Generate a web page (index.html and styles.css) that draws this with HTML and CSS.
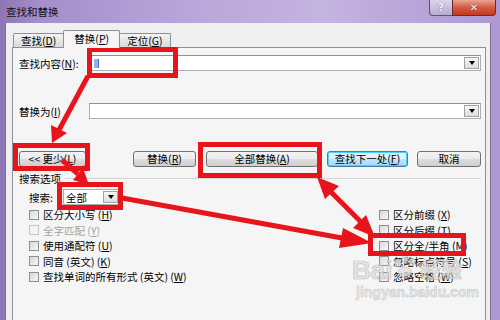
FILE: index.html
```html
<!DOCTYPE html>
<html lang="zh-CN">
<head>
  <meta charset="UTF-8">
  <title>查找和替换</title>
  <link rel="stylesheet" href="styles.css">
</head>
<body>
  <div class="window">
    <div class="titlebar">
      <span class="title">查找和替换</span>
      <div class="caption-btns">
        <span class="cap-btn help">?</span>
        <span class="cap-btn close">✕</span>
      </div>
    </div>

    <div class="client">
      <div class="tabs">
        <div class="tab">查找(<u>D</u>)</div>
        <div class="tab active">替换(<u>P</u>)</div>
        <div class="tab">定位(<u>G</u>)</div>
      </div>

      <div class="panel">
        <div class="field">
          <label>查找内容(<u>N</u>):</label>
          <div class="combo"><span class="caret"></span><span class="drop"></span></div>
        </div>
        <div class="field second">
          <label>替换为(<u>I</u>)</label>
          <div class="combo"><span class="drop"></span></div>
        </div>

        <div class="buttons">
          <div class="btn less">&lt;&lt; 更少(<u>L</u>)</div>
          <div class="btn replace">替换(<u>R</u>)</div>
          <div class="btn replace-all">全部替换(<u>A</u>)</div>
          <div class="btn find-next">查找下一处(<u>F</u>)</div>
          <div class="btn cancel">取消</div>
        </div>

        <div class="group-title"><span>搜索选项</span><i></i></div>

        <div class="search-row">
          <span class="search-label">搜索:</span>
          <div class="select">全部<span class="drop"></span></div>
        </div>

        <div class="options">
          <div class="col first">
            <div class="opt"><span class="box"></span>区分大小写 (<u>H</u>)</div>
            <div class="opt disabled"><span class="box"></span>全字匹配 (<u>Y</u>)</div>
            <div class="opt"><span class="box"></span>使用通配符 (<u>U</u>)</div>
            <div class="opt"><span class="box"></span>同音 (英文) (<u>K</u>)</div>
            <div class="opt"><span class="box"></span>查找单词的所有形式 (英文) (<u>W</u>)</div>
          </div>
          <div class="col">
            <div class="opt"><span class="box"></span>区分前缀 (<u>X</u>)</div>
            <div class="opt"><span class="box"></span>区分后缀 (<u>T</u>)</div>
            <div class="opt"><span class="box"></span>区分全/半角 (<u>M</u>)</div>
            <div class="opt"><span class="box"></span>忽略标点符号 (<u>S</u>)</div>
            <div class="opt"><span class="box"></span>忽略空格 (<u>W</u>)</div>
          </div>
        </div>
      </div>
    </div>

    <!-- annotations drawn over the dialog -->
    <svg class="marks" width="500" height="320" viewBox="0 0 500 320">
      <g class="watermark">
        <text x="352" y="279" class="wm-big">Bai</text>
        <g class="paw">
          <ellipse cx="398" cy="263" rx="3" ry="4"/>
          <ellipse cx="405" cy="259" rx="3" ry="4"/>
          <ellipse cx="412" cy="262" rx="3" ry="4"/>
          <ellipse cx="405" cy="272" rx="7" ry="5"/>
        </g>
        <text x="420" y="277" class="wm-cn">经验</text>
        <text x="356" y="297" class="wm-url">jingyan.baidu.com</text>
      </g>

      <g class="red-box">
        <rect x="89.5" y="49.5" width="86" height="26"/>
        <rect x="15.5" y="145.5" width="72" height="23"/>
        <rect x="200.5" y="144.5" width="119" height="31"/>
        <rect x="59.5" y="184.5" width="61" height="23"/>
        <rect x="370.5" y="235.5" width="93" height="18"/>
      </g>

      <g class="arrow">
        <line x1="88" y1="76" x2="59" y2="130"/>
        <polygon points="52,143 67,133 51,125"/>

        <line x1="62" y1="160" x2="78" y2="174"/>
        <polygon points="89,185 73,180 83,168"/>

        <line x1="122" y1="198" x2="342" y2="238"/>
        <polygon points="372,243 339,248 343,228"/>

        <line x1="331" y1="192" x2="361" y2="222"/>
        <polygon points="317,177 325,199 339,186"/>
        <polygon points="375,237 353,228 366,215"/>
      </g>
    </svg>
  </div>
</body>
</html>
```

FILE: styles.css
```css
body {
  margin: 0;
  width: 500px;
  height: 320px;
  overflow: hidden;
  font-family: "Noto Sans CJK SC", "Liberation Sans", sans-serif;
  font-size: 10.5px;
  color: #000;
}
u {
  text-decoration: underline;
}
.window {
  position: relative;
  width: 500px;
  height: 320px;
  overflow: hidden;
  background: linear-gradient(90deg, #8e76b6 0, #a58ecc 8%, #bba7db 40%, #c5b3e1 65%, #ae98d2 100%);
}
.titlebar {
  height: 23px;
  display: flex;
  align-items: flex-start;
  padding: 0 4px 0 6px;
}
.title {
  margin-top: 6px;
  line-height: 12px;
  color: #111;
}
.caption-btns {
  margin-left: auto;
  display: flex;
}
.cap-btn {
  height: 15px;
  display: flex;
  align-items: center;
  justify-content: center;
  color: #fff;
  font-family: "DejaVu Sans", sans-serif;
  font-weight: bold;
}
.help {
  width: 22px;
  border: 1px solid #62507f;
  border-top: none;
  border-right: none;
  border-radius: 0 0 0 4px;
  background: linear-gradient(#ddd4ec, #b9aad3);
  font-size: 11px;
  text-shadow: 0 0 1px #333;
}
.close {
  width: 42px;
  border: 1px solid #6d2b22;
  border-top: none;
  border-radius: 0 0 4px 0;
  background: linear-gradient(#e9a592, #d45a40 50%, #c13a22);
  font-size: 10px;
  text-shadow: 0 0 1px #500;
}
.client {
  margin: 0 9px 0 5px;
  height: 297px;
  padding: 7px 0 0 6px;
  box-sizing: border-box;
  background: #efefef;
  border-left: 1px solid #7b6c95;
  border-right: 1px solid #7b6c95;
}
.tabs {
  display: flex;
  align-items: flex-end;
  margin-left: 1px;
  height: 17px;
}
.tab {
  height: 13px;
  line-height: 13px;
  padding: 0 7px;
  border: 1px solid #8d9097;
  border-bottom: none;
  border-radius: 2px 2px 0 0;
  background: linear-gradient(#f4f4f4, #e6e6e6 50%, #dadada);
  margin-right: -1px;
}
.tab.active {
  height: 17px;
  line-height: 16px;
  padding: 0 10px;
  background: #f5f5f5;
  position: relative;
  z-index: 1;
  margin-bottom: -1px;
}
.panel {
  margin-right: 4px;
  height: 300px;
  border: 1px solid #8d9097;
  background: #f5f5f5;
  padding: 7px 4px 0 6px;
}
.field {
  display: flex;
  align-items: center;
  height: 16px;
}
.field.second {
  margin-top: 32px;
}
.field label {
  width: 70px;
}
.combo {
  flex: 1;
  height: 14px;
  display: flex;
  align-items: center;
  padding: 0 1px 0 2px;
  border: 1px solid #abadb3;
  border-top-color: #8e9095;
  background: #fff;
}
.caret {
  width: 4px;
  height: 9px;
  margin-left: 2px;
  background: #8fb4e3;
  border-right: 1px solid #3f72c2;
}
.drop {
  margin-left: auto;
  width: 13px;
  height: 10px;
  border: 1px solid #a3a3a3;
  background: linear-gradient(#f7f7f7, #dedede);
  display: flex;
  align-items: center;
  justify-content: center;
}
.drop::after {
  content: "";
  border-left: 3px solid transparent;
  border-right: 3px solid transparent;
  border-top: 4px solid #000;
}
.buttons {
  display: flex;
  margin-top: 32px;
}
.btn {
  height: 14px;
  line-height: 14px;
  text-align: center;
  border: 1px solid #707070;
  border-radius: 3px;
  background: linear-gradient(#f3f3f3, #ebebeb 50%, #dddddd 50%, #cfcfcf);
}
.less { width: 65px; }
.replace { width: 61px; margin-left: 47px; }
.replace-all { width: 110px; margin-left: 10px; }
.find-next {
  width: 79px;
  margin-left: 9px;
  border-color: #3c7fb1;
  background: linear-gradient(#eaf6fd, #d9f0fc 50%, #bee6fd 50%, #a7d9f5);
  box-shadow: inset 0 0 0 1px #48d4f8;
}
.cancel { width: 62px; margin-left: 9px; }
.group-title {
  display: flex;
  align-items: center;
  margin-top: 5px;
  height: 12px;
}
.group-title i {
  flex: 1;
  height: 1px;
  margin-left: 4px;
  background: #d5d5d5;
}
.search-row {
  display: flex;
  align-items: center;
  margin-top: 5px;
  padding-left: 10px;
  height: 16px;
}
.search-label {
  width: 34px;
}
.select {
  width: 52px;
  height: 14px;
  display: flex;
  align-items: center;
  padding: 0 1px 0 2px;
  border: 1px solid #abadb3;
  background: #fff;
}
.options {
  display: flex;
  margin-top: 2px;
  padding-left: 10px;
}
.col {
  flex: 1;
}
.col.first {
  flex: 0 0 350px;
}
.opt {
  height: 15.5px;
  display: flex;
  align-items: center;
  white-space: nowrap;
}
.box {
  width: 8px;
  height: 8px;
  margin-right: 4px;
  border: 1px solid #8e8f8f;
  background: linear-gradient(135deg, #d8d8d8, #f8f8f8);
}
.opt.disabled {
  color: #a3a3a3;
}
.opt.disabled .box {
  border-color: #c4c4c4;
  background: #f4f4f4;
}
.marks {
  position: absolute;
  top: 0;
  left: 0;
  pointer-events: none;
}
.red-box rect {
  fill: none;
  stroke: #e8141b;
  stroke-width: 5;
}
.arrow line {
  stroke: #e8141b;
  stroke-width: 5;
}
.arrow polygon {
  fill: #e8141b;
}
.watermark {
  opacity: 0.75;
}
.wm-big {
  font-family: "Liberation Sans", sans-serif;
  font-weight: bold;
  font-size: 26px;
  fill: #dedede;
  stroke: #b5b5b5;
  stroke-width: 0.7;
}
.paw ellipse {
  fill: #dedede;
  stroke: #b5b5b5;
  stroke-width: 0.7;
}
.wm-cn {
  font-family: "Noto Sans CJK SC", sans-serif;
  font-weight: bold;
  font-size: 21px;
  fill: #dedede;
  stroke: #b5b5b5;
  stroke-width: 0.6;
}
.wm-url {
  font-family: "Liberation Sans", sans-serif;
  font-weight: bold;
  font-size: 14px;
  fill: #e2e2e2;
  stroke: #b8b8b8;
  stroke-width: 0.5;
}
```
